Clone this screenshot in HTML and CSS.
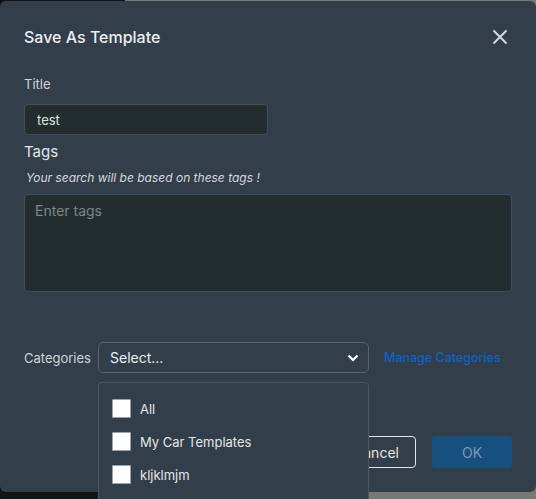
FILE: index.html
```html
<!DOCTYPE html>
<html lang="en">
<head>
    <meta charset="UTF-8">
    <title>Save As Template</title>
    <link rel="stylesheet" href="styles.css">
</head>
<body>
    <div class="backdrop">
        <div class="modal">
            <div class="modal-header">
                <h2 class="modal-title">Save As Template</h2>
                <button class="close-btn" aria-label="Close">
                    <svg width="16" height="16" viewBox="0 0 16 16">
                        <path d="M1.5 1.5 L14.5 14.5 M14.5 1.5 L1.5 14.5" stroke="#d3d7db" stroke-width="2" fill="none"/>
                    </svg>
                </button>
            </div>

            <label class="field-label" for="title">Title</label>
            <input type="text" id="title" class="title-input" value="test">

            <div class="tags-label">Tags</div>
            <div class="tags-hint">Your search will be based on these tags !</div>
            <textarea class="tags-input" placeholder="Enter tags"></textarea>

            <div class="category-row">
                <span class="category-label">Categories</span>
                <div class="select-wrap">
                    <div class="select-box">
                        <span>Select...</span>
                        <svg width="12" height="8" viewBox="0 0 12 8">
                            <path d="M1.5 1.5 L6 6 L10.5 1.5" stroke="#ffffff" stroke-width="2.2" fill="none"/>
                        </svg>
                    </div>
                    <ul class="dropdown">
                        <li><span class="check"></span>All</li>
                        <li><span class="check"></span>My Car Templates</li>
                        <li><span class="check"></span>kljklmjm</li>
                    </ul>
                </div>
                <a href="#" class="manage-link">Manage Categories</a>
            </div>

            <div class="modal-footer">
                <button class="btn btn-cancel">Cancel</button>
                <button class="btn btn-ok">OK</button>
            </div>
        </div>
    </div>
</body>
</html>
```

FILE: styles.css
```css
html, body {
    margin: 0;
    height: 100%;
    overflow: hidden;
}

body {
    font-family: Inter, "Noto Sans", sans-serif;
    background: linear-gradient(to right, #111417 0, #111417 125px, #787878 125px);
}

.backdrop {
    padding-top: 1px;
}

.modal {
    position: relative;
    box-sizing: border-box;
    width: 536px;
    height: 491px;
    padding: 25px 24px 24px;
    background-color: #323f4b;
    border-radius: 6px;
    color: #e3e6e8;
}

.modal-header {
    display: flex;
    align-items: center;
    justify-content: space-between;
    height: 22px;
}

.modal-title {
    margin: 0;
    font-size: 16px;
    font-weight: 500;
    line-height: 22px;
    color: #eceef0;
}

.close-btn {
    display: flex;
    padding: 0;
    margin-right: 4px;
    background: none;
    border: none;
    cursor: pointer;
}

.field-label {
    display: block;
    margin-top: 28px;
    font-size: 13px;
    line-height: 16px;
    color: #cfd3d6;
}

.title-input {
    display: block;
    box-sizing: border-box;
    width: 244px;
    height: 31px;
    margin-top: 12px;
    padding: 0 12px;
    background-color: #232d2f;
    border: 1px solid #3d5062;
    border-radius: 4px;
    color: #dfe2e4;
    font-family: inherit;
    font-size: 13px;
    outline: none;
}

.tags-label {
    margin-top: 7px;
    font-size: 15px;
    line-height: 20px;
    color: #e3e6e8;
}

.tags-hint {
    margin-top: 8px;
    padding-left: 2px;
    font-size: 12px;
    font-style: italic;
    line-height: 16px;
    color: #d5d9dc;
}

.tags-input {
    display: block;
    box-sizing: border-box;
    width: 488px;
    height: 98px;
    margin-top: 8px;
    padding: 7px 10px;
    background-color: #232d2f;
    border: 1px solid #3d5062;
    border-radius: 4px;
    color: #dfe2e4;
    font-family: inherit;
    font-size: 14px;
    line-height: 18px;
    resize: none;
    outline: none;
}

.tags-input::placeholder {
    color: #7d8687;
}

.category-row {
    display: flex;
    align-items: center;
    margin-top: 50px;
    height: 31px;
}

.category-label {
    width: 74px;
    font-size: 13px;
    color: #d0d4d7;
}

.select-wrap {
    position: relative;
    width: 271px;
}

.select-box {
    box-sizing: border-box;
    display: flex;
    align-items: center;
    justify-content: space-between;
    height: 31px;
    padding: 0 9px 0 11px;
    border: 1px solid #56636e;
    border-radius: 5px;
    font-size: 14px;
    color: #eceef0;
}

.dropdown {
    position: absolute;
    top: calc(100% + 9px);
    left: 0;
    right: 0;
    margin: 0;
    padding: 16px 13px 30px;
    list-style: none;
    background-color: #323f4b;
    border: 1px solid #4a5662;
    border-radius: 4px;
    z-index: 2;
}

.dropdown li {
    display: flex;
    align-items: center;
    gap: 9px;
    height: 19px;
    margin-bottom: 14px;
    font-size: 13px;
    color: #e3e6e8;
}

.check {
    box-sizing: border-box;
    width: 19px;
    height: 19px;
    background-color: #ffffff;
    border: 1px solid #9aa3ab;
    border-radius: 1px;
}

.manage-link {
    margin-left: 15px;
    font-size: 12.5px;
    font-weight: 500;
    color: #0b63c6;
    text-decoration: none;
}

.modal-footer {
    display: flex;
    justify-content: flex-end;
    gap: 16px;
    margin-top: 63px;
}

.btn {
    width: 80px;
    height: 32px;
    border-radius: 4px;
    font-family: inherit;
    font-size: 14px;
    cursor: pointer;
}

.btn-cancel {
    background: transparent;
    border: 1px solid #e4e6e8;
    color: #e4e6e8;
}

.btn-ok {
    background-color: #15507f;
    border: none;
    color: #8199b0;
}
```
